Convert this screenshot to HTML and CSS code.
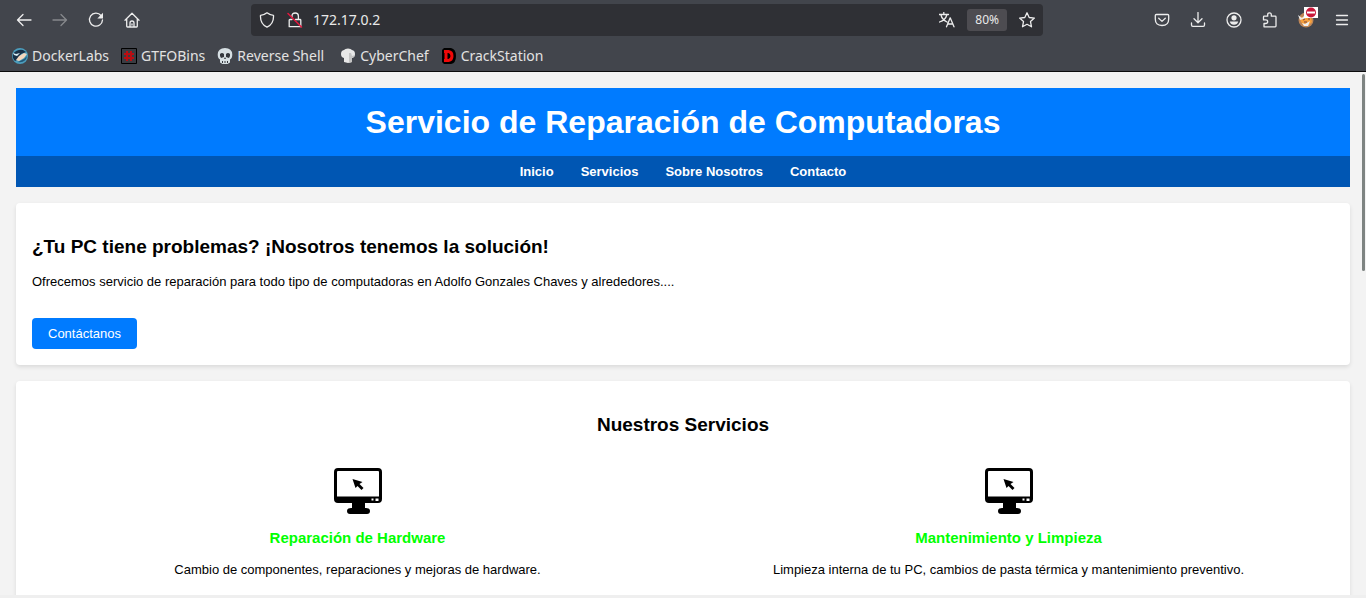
FILE: index.html
```html
<!DOCTYPE html>
<html lang="es">
<head>
<meta charset="utf-8">
<meta name="viewport" content="width=device-width, initial-scale=1">
<title>Servicio de Reparación de Computadoras</title>
<link rel="stylesheet" href="styles.css">
</head>
<body>
<div class="browser">
  <div class="toolbar">
    <div class="tools">
      <button class="tool" aria-label="Atrás"><svg class="icon" viewBox="0 0 16 16"><path d="M15 8H1.500M7 2.500 1.500 8 7 13.500"/></svg></button>
      <button class="tool tool-off" aria-label="Adelante" disabled><svg class="icon" viewBox="0 0 16 16"><path d="M1 8h13.500M9 2.500 14.500 8 9 13.500"/></svg></button>
      <button class="tool" aria-label="Recargar"><svg class="icon" viewBox="0 0 16 16"><path d="M13 3.500A6.500 6.500 0 1 0 14.500 8"/><path class="solid" d="M15 .8v5.700H9.300z"/></svg></button>
      <button class="tool" aria-label="Inicio"><svg class="icon" viewBox="0 0 16 16"><path d="M1 8.200 8 1.300l7 6.900M2.700 6.800v7.400q0 .8.800.8h9q.8 0 .8-.8V6.800M6 15v-4q0-2 2-2t2 2v4M8 12v1"/></svg></button>
    </div>
    <div class="address">
      <svg class="icon" viewBox="0 0 16 16"><path d="M8 .8q3.300 2.600 6.500 2.600.5 8.500-6.500 11.800Q1 11.900 1.500 3.400 4.700 3.400 8 .8z"/></svg>
      <svg class="icon icon-lock" viewBox="0 0 16 16"><path d="M5 5V4q0-3 3.200-3t3.200 3v3M5 7.500H3q-.8 0-.8.800v6.400h11.600V8.300q0-.8-.8-.8H8.500"/><path class="slash" d="m1 1.500 13.500 13.500"/></svg>
      <input class="url" type="text" value="172.17.0.2" aria-label="Dirección">
      <button class="mini" aria-label="Traducir"><svg class="icon" viewBox="0 0 16 16"><path d="M0 2.500h9.500M4.800.5v2M2 3q1 4.500 6 7M7.800 3Q6.500 8 .5 10M7.500 14.800l3.700-9 3.800 9M8.600 12h5.200"/></svg></button>
      <button class="zoom">80%</button>
      <button class="mini" aria-label="Añadir a marcadores"><svg class="icon" viewBox="0 0 16 16"><path d="m8 .8 2.200 4.700 5.200.6-3.900 3.500 1 5.200L8 12.300l-4.500 2.500 1-5.200L.6 6.100l5.200-.6z"/></svg></button>
    </div>
    <div class="tools">
      <button class="tool" aria-label="Pocket"><svg class="icon" viewBox="0 0 16 16"><path d="M2.300 2.500h11.400q1 0 1 1V7q0 6.500-6.700 6.500T1.300 7V3.500q0-1 1-1zM4.700 6.300 8 9.400l3.300-3.100"/></svg></button>
      <button class="tool" aria-label="Descargas"><svg class="icon" viewBox="0 0 16 16"><path d="M8 .5v10M4 6.800l4 4 4-4M1.500 11v2q0 1.300 1.300 1.300h10.400q1.300 0 1.300-1.300v-2"/></svg></button>
      <button class="tool" aria-label="Cuenta"><svg class="icon" viewBox="0 0 16 16"><circle cx="8" cy="8" r="7"/><circle class="solid" cx="8" cy="5.800" r="2.600"/><path class="solid" d="M3.800 9.600h8.400q-.8 3.200-4.200 3.200T3.800 9.600z"/></svg></button>
      <button class="tool" aria-label="Extensiones"><svg class="icon" viewBox="0 0 16 16"><path d="M2 14.800V11.500h1.700q2 0 2-1.800t-2-1.800H1.500V5q0-.8.800-.8h3.400V2.500Q5.700.8 7.500.8t1.800 1.700v1.700h3.900q.8 0 .8.800v9q0 .8-.8.800z"/></svg></button>
      <button class="tool proxy" aria-label="FoxyProxy"><svg class="favicon" viewBox="0 0 16 16"><circle cx="8" cy="8" r="7.500" fill="#bd8657"/><path fill="#f6a03c" d="M3 5h10l1 5-4 4H6L2.500 9z"/><path fill="#eee" d="m0 3 4 3 2-2 2 2-6 2zm4 8 3 1 5-3-2 5-4 0z"/><path stroke="#744" fill="none" d="m5 8 2-1m3 0h2m-6 3h3"/></svg><svg class="badge" viewBox="0 0 14 11"><path fill="#fff" d="M0 0h14v11H0z"/><circle cx="7" cy="5.500" r="5" fill="#c9183b"/><path fill="#fff" d="M3 4.500h8v2H3z"/></svg></button>
      <button class="tool" aria-label="Menú"><svg class="icon" viewBox="0 0 16 16"><path d="M2.500 3.500h11M2.500 8h11M2.500 12.500h11"/></svg></button>
    </div>
  </div>
  <nav class="bookmarks" aria-label="Marcadores">
    <a class="bookmark" href="#"><svg class="favicon" viewBox="0 0 16 16"><circle cx="8" cy="8" r="8" fill="#4b9dbd"/><path fill="#183047" d="M1 6q4-5 10-4l3 2-5 2-4 6-2 1q-3-3-2-7z"/><path fill="#f4d7bd" d="m7 8 5-3 3 1-3 4-5 3-3-1z"/><path fill="#d8edf3" d="m1 5 3 1 4-1-3 3-3-1z"/><path fill="#235878" d="m6 14 6-3 3-3q-1 7-9 6z"/></svg>DockerLabs</a>
    <a class="bookmark" href="#"><svg class="favicon" viewBox="0 0 16 16"><path fill="#3a3c42" stroke="#000" d="M.5.5h15v15H.5z"/><path stroke="#b90d12" stroke-width="2" d="M6 3v10M10 3v10M3 6h10M3 10h10"/></svg>GTFOBins</a>
    <a class="bookmark" href="#"><svg class="favicon" viewBox="0 0 16 16"><path fill="#d6dfe3" d="M8 0q7 0 7.300 6.500 0 4-2.300 5v3L10.500 16h-5L3 14.500v-3Q.7 10.500.7 6.500 1 0 8 0z"/><path fill="#34383e" d="M3 6q2-2 4 0v3l-3 1-1-2zM13 6q-2-2-4 0v3l3 1 1-2zM8 9l1 2H7zM5 13h1v2H5zm2.500 0h1v2h-1zM10 13h1v2h-1z"/></svg>Reverse Shell</a>
    <a class="bookmark bookmark-chef" href="#"><svg class="favicon" viewBox="0 0 16 16"><path fill="#e8e8e8" d="M4 14V10Q1 9.500 1 6t3-4q1-1.500 4-1.500T12 2q3 .5 3 4t-3 4v4l-4 1z"/><path fill="#c4c4c4" d="M9 5v10l3-1v-4q2.500-.5 3-3l-3 1-1-3z"/></svg>CyberChef</a>
    <a class="bookmark" href="#"><svg class="favicon" viewBox="0 0 16 16"><path fill="#000" d="M3 0h7q5 1 5 8t-5 8H3L1 14V2z"/><path fill="none" stroke="#f00808" stroke-width="3" d="M5 3.500v9M3 3.500h4.500q3.500.5 3.500 4.500t-3.500 4.500H3"/></svg>CrackStation</a>
  </nav>
</div>
<div class="page">
  <header class="hero">
    <h1 class="hero-title">Servicio de Reparación de Computadoras</h1>
    <nav class="menu">
      <a class="menu-link" href="#inicio">Inicio</a>
      <a class="menu-link" href="#servicios">Servicios</a>
      <a class="menu-link" href="#nosotros">Sobre Nosotros</a>
      <a class="menu-link" href="#contacto">Contacto</a>
    </nav>
  </header>
  <section class="card" id="inicio">
    <h2 class="heading">¿Tu PC tiene problemas? ¡Nosotros tenemos la solución!</h2>
    <p class="text">Ofrecemos servicio de reparación para todo tipo de computadoras en Adolfo Gonzales Chaves y alrededores....</p>
    <a class="cta" href="#contacto">Contáctanos</a>
  </section>
  <section class="card card-last" id="servicios">
    <h2 class="heading heading-center">Nuestros Servicios</h2>
    <div class="services">
      <article class="service">
        <svg class="monitor" viewBox="0 0 48 48"><path fill-rule="evenodd" d="M4 1h40q4 0 4 4v27q0 4-4 4H31v5h1q4 0 4 3t-3 3H16q-3 0-3-3t4-3h1v-5H4q-4 0-4-4V5q0-4 4-4zm0 3q-1 0-1 1v24.500h42V5q0-1-1-1zM18.500 12l3 9 2-2 4 4 2-2-4-4 3-2zM37.500 31.500v2h2v-2zm4 0v2.500h3v-2.500z"/></svg>
        <h3 class="service-title">Reparación de Hardware</h3>
        <p class="text">Cambio de componentes, reparaciones y mejoras de hardware.</p>
      </article>
      <article class="service">
        <svg class="monitor" viewBox="0 0 48 48"><path fill-rule="evenodd" d="M4 1h40q4 0 4 4v27q0 4-4 4H31v5h1q4 0 4 3t-3 3H16q-3 0-3-3t4-3h1v-5H4q-4 0-4-4V5q0-4 4-4zm0 3q-1 0-1 1v24.500h42V5q0-1-1-1zM18.500 12l3 9 2-2 4 4 2-2-4-4 3-2zM37.500 31.500v2h2v-2zm4 0v2.500h3v-2.500z"/></svg>
        <h3 class="service-title">Mantenimiento y Limpieza</h3>
        <p class="text">Limpieza interna de tu PC, cambios de pasta térmica y mantenimiento preventivo.</p>
      </article>
    </div>
  </section>
  <div class="scroll-thumb"></div>
</div>
<div class="window-edge"></div>
</body>
</html>
```
FILE: styles.css
```css
* { box-sizing: border-box; }

body {
  margin: 0;
  height: 100vh;
  display: flex;
  flex-direction: column;
  overflow: hidden;
  background: #f3f3f3;
  color: #000;
  font: 13px/15px "Liberation Sans", Arial, sans-serif;
}

h1, h2, h3, p { margin: 0; }
a { text-decoration: none; }
button, input { font: inherit; color: inherit; background: none; border: 0; padding: 0; }

/* Browser chrome */
.browser {
  flex: none;
  background: #42454c;
  border-bottom: 1px solid #0c0c0d;
  color: #e9e9e9;
  font: 14px/20px "Noto Sans", sans-serif;
}
.toolbar {
  height: 40px;
  padding: 0 6px;
  display: flex;
  align-items: center;
  justify-content: space-between;
}
.tools { display: flex; }
.tool {
  width: 36px;
  height: 32px;
  display: flex;
  align-items: center;
  justify-content: center;
}
.tool-off { opacity: 0.4; }
.icon {
  flex: none;
  width: 16px;
  height: 16px;
  fill: none;
  stroke: #ededed;
  stroke-width: 1.3;
  stroke-linejoin: round;
  stroke-linecap: round;
}
.solid { fill: #ededed; stroke: none; }
.slash { stroke: #e3173e; stroke-width: 1.5; }
.address {
  width: 58.5%;
  height: 32px;
  padding: 0 8px;
  display: flex;
  align-items: center;
  background: #2f3035;
  border-radius: 4px;
}
.icon-lock { margin: 0 10px 0 12px; }
.url {
  flex: 1;
  min-width: 0;
  font-size: 14px;
}
.mini { display: flex; }
.zoom {
  margin: 0 12px;
  padding: 0 8px;
  height: 22px;
  border-radius: 3px;
  background: #4d4c51;
  font-size: 12px;
}
.proxy { position: relative; }
.badge {
  position: absolute;
  top: 3px;
  right: 6px;
  width: 14px;
  height: 11px;
}
.bookmarks {
  height: 31px;
  padding: 0 12px;
  display: flex;
  align-items: center;
  gap: 12px;
}
.bookmark {
  display: flex;
  align-items: center;
  gap: 4px;
  color: #e2e2e2;
}
.bookmark-chef { margin-left: 4px; }
.favicon { flex: none; width: 16px; height: 16px; }

/* Site */
.page {
  position: relative;
  flex: 1;
  min-height: 0;
  overflow: hidden;
  padding: 16px;
}
.hero { text-align: center; color: #fff; background: #007bff; }
.hero-title { padding: 16px; font-size: 32px; line-height: 36px; }
.menu {
  padding: 8px;
  display: flex;
  justify-content: center;
  gap: 27px;
  background: #0056b3;
}
.menu-link { color: #fff; font-weight: bold; }
.card {
  margin-top: 16px;
  padding: 32px 16px 16px;
  background: #fff;
  border-radius: 4px;
  box-shadow: 0 2px 4px rgba(0, 0, 0, 0.1);
}
.card-last { padding-bottom: 48px; }
.heading { margin-bottom: 16px; font-size: 19px; line-height: 23px; }
.heading-center { margin-bottom: 31px; text-align: center; }
.cta {
  display: inline-block;
  margin-top: 29px;
  padding: 8px 16px;
  background: #007bff;
  color: #fff;
  border-radius: 4px;
  vertical-align: top;
}
.services { display: grid; grid-template-columns: 1fr 1fr; text-align: center; }
.monitor { display: block; width: 48px; height: 48px; margin: 0 auto 14px; }
.service-title {
  margin-bottom: 16px;
  font-size: 15px;
  line-height: 17px;
  color: #0f0;
}
.scroll-thumb {
  position: absolute;
  top: 2px;
  right: 1px;
  width: 3px;
  height: 197px;
  border-radius: 2px;
  background: #7e8482;
}
.window-edge { flex: none; height: 3px; background: #efefef; }
```
